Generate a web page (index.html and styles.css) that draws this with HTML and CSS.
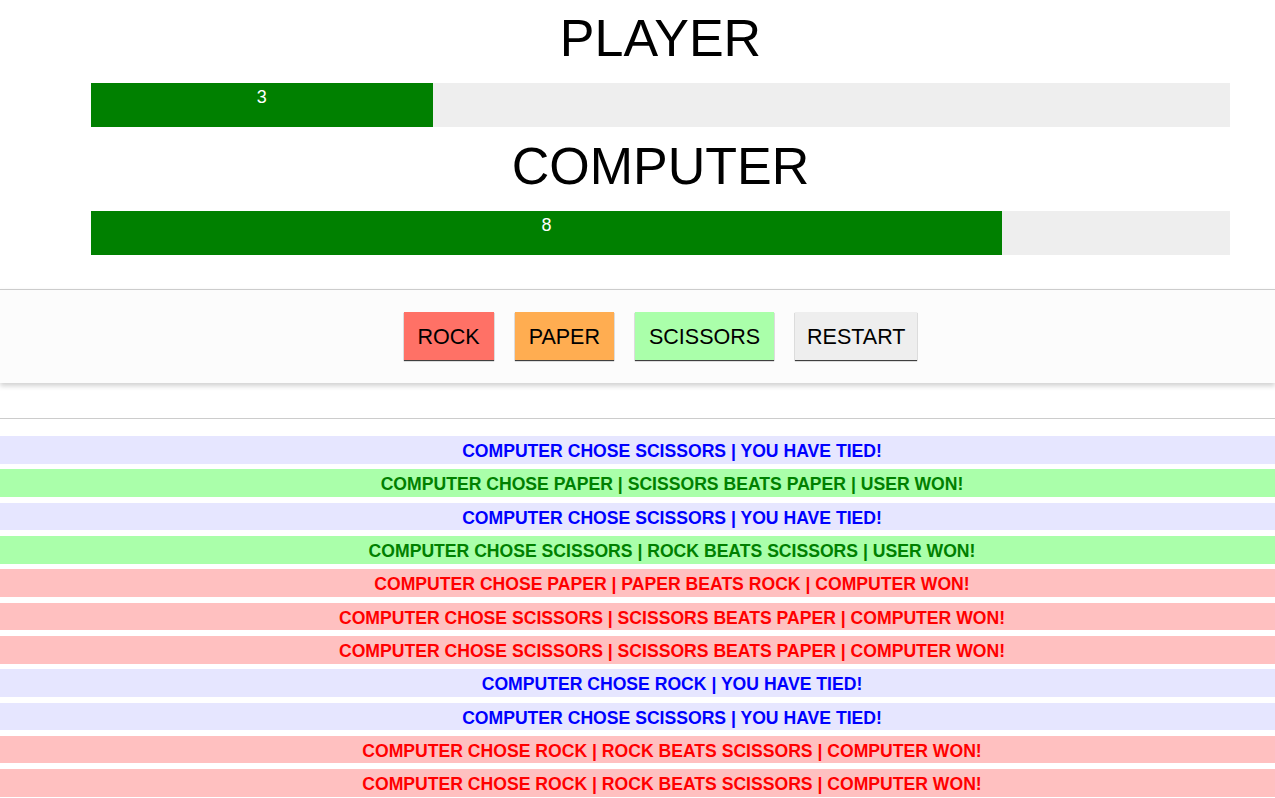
FILE: index.html
```html
<!DOCTYPE html>
<html>
<head>
<meta charset="utf-8">
<title>Rock Paper Scissors</title>
<link rel="stylesheet" href="styles.css">
</head>
<body>
<div class="scoreboard">
  <h1 class="title">PLAYER</h1>
  <div class="bar"><div class="fill" style="width:30%">3</div></div>
  <h1 class="title">COMPUTER</h1>
  <div class="bar"><div class="fill" style="width:80%">8</div></div>
</div>
<div class="controls">
  <button class="btn btn-rock">ROCK</button>
  <button class="btn btn-paper">PAPER</button>
  <button class="btn btn-scissors">SCISSORS</button>
  <button class="btn btn-restart">RESTART</button>
</div>
<hr class="divider">
<div class="log">
  <div class="row tie">COMPUTER CHOSE SCISSORS | YOU HAVE TIED!</div>
  <div class="row win">COMPUTER CHOSE PAPER | SCISSORS BEATS PAPER | USER WON!</div>
  <div class="row tie">COMPUTER CHOSE SCISSORS | YOU HAVE TIED!</div>
  <div class="row win">COMPUTER CHOSE SCISSORS | ROCK BEATS SCISSORS | USER WON!</div>
  <div class="row lose">COMPUTER CHOSE PAPER | PAPER BEATS ROCK | COMPUTER WON!</div>
  <div class="row lose">COMPUTER CHOSE SCISSORS | SCISSORS BEATS PAPER | COMPUTER WON!</div>
  <div class="row lose">COMPUTER CHOSE SCISSORS | SCISSORS BEATS PAPER | COMPUTER WON!</div>
  <div class="row tie">COMPUTER CHOSE ROCK | YOU HAVE TIED!</div>
  <div class="row tie">COMPUTER CHOSE SCISSORS | YOU HAVE TIED!</div>
  <div class="row lose">COMPUTER CHOSE ROCK | ROCK BEATS SCISSORS | COMPUTER WON!</div>
  <div class="row lose">COMPUTER CHOSE ROCK | ROCK BEATS SCISSORS | COMPUTER WON!</div>
</div>
</body>
</html>
```
FILE: styles.css
```css
html, body {
  margin: 0;
  padding: 0;
  background: #ffffff;
  font-family: "Liberation Sans", Arial, Helvetica, sans-serif;
  overflow: hidden;
}

.scoreboard {
  padding: 8px 0 25px 46px;
}

.title {
  margin: 0 0 15px;
  font-size: 52px;
  line-height: 60px;
  font-weight: normal;
  color: #000;
  text-align: center;
}

.bar {
  height: 44px;
  margin: 0 45px 9px;
  background: #eeeeee;
}

.fill {
  height: 44px;
  background: #008000;
  color: #ffffff;
  font-size: 18px;
  line-height: 24px;
  padding-top: 2px;
  box-sizing: border-box;
  text-align: center;
}

.controls {
  border-top: 1px solid #cccccc;
  background: #fcfcfc;
  padding: 22px 0 23px 46px;
  display: flex;
  justify-content: center;
  gap: 21px;
  box-shadow: 0 3px 5px rgba(0, 0, 0, 0.18);
  position: relative;
}

.btn {
  height: 48px;
  padding: 2px 14px 0;
  border: none;
  margin: 0;
  font-family: "Liberation Sans", Arial, Helvetica, sans-serif;
  font-size: 21.5px;
  color: #000;
  box-shadow: 0 1px 1px rgba(0, 0, 0, 0.75);
}

.btn-rock { background: #ff7166; }
.btn-paper { background: #ffad51; }
.btn-scissors { background: #aaffaa; }
.btn-restart { background: #eeeeee; padding: 2px 12px 0; }

.divider {
  border: none;
  border-top: 1px solid #cccccc;
  margin: 35px 0 17px;
  height: 0;
}

.log {
  display: flex;
  flex-direction: column;
  gap: 5.66px;
}

.row {
  height: 27.67px;
  line-height: 30px;
  padding-left: 69px;
  text-align: center;
  font-size: 17.6px;
  font-weight: bold;
}

.tie { background: #e6e6ff; color: #0000ff; }
.win { background: #aaffaa; color: #008000; }
.lose { background: #ffc0c0; color: #ff0000; }
```
